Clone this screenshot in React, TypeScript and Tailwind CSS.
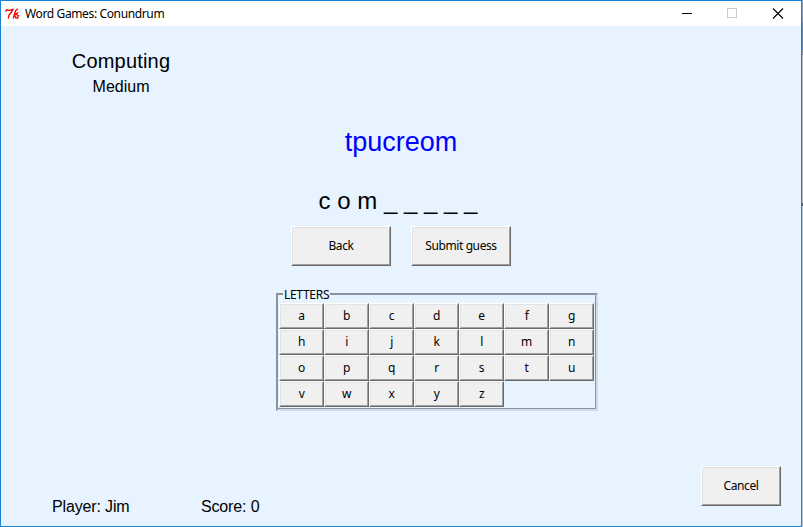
import React from "react";

const UI = "font-['Noto_Sans',sans-serif]";
const ARIAL = "font-['Liberation_Sans',Arial,sans-serif]";

function TkButton({ label, size }: { label: string; size: string }) {
  return (
    <button
      className={`${size} ${UI} shrink-0 border border-t-white border-l-white border-r-[#696969] border-b-[#696969] bg-[#f0f0f0] text-[12px] leading-none tracking-[-0.4px] text-black`}
    >
      <span className="flex h-full w-full items-center justify-center border border-t-[#e3e3e3] border-l-[#e3e3e3] border-r-[#a0a0a0] border-b-[#a0a0a0]">
        <span className="whitespace-nowrap">{label}</span>
      </span>
    </button>
  );
}

function TkLogo() {
  return (
    <svg width="15" height="12" viewBox="0 0 15 12" fill="none" stroke="#f00000" strokeWidth="1.3">
      <path d="M0.5 3.5L1.8 1.8L4 2.3L8 1.5L6.5 4L4 7L3.2 10.5" />
      <path d="M12.8 0.8L10.8 2.5L9.5 6L8.2 10.5M9 7.8L13.2 4.2M9.5 7.5L11 10L13.8 9.8M11.5 6.5L13.5 7.8L12 8.5" />
    </svg>
  );
}

export default function App() {
  return (
    <div className="flex h-[527px] w-[803px] overflow-hidden">
      <div className="flex w-[802px] shrink-0 flex-col border border-[#1883d7] bg-[#e7f3ff]">
        <header className="flex h-[25px] shrink-0 items-center bg-white pl-[4px]">
          <TkLogo />
          <span className={`${UI} ml-[5px] grow text-[12px] leading-none tracking-[-0.37px] text-black`}>
            Word Games: Conundrum
          </span>
          <svg width="120" height="25" viewBox="0 0 120 25" fill="none" shapeRendering="crispEdges">
            <path d="M1 12.5H11" stroke="#000" />
            <rect x="46.5" y="7.5" width="9" height="9" stroke="#ccc" />
            <path d="M92 7.5L102 17.5M102 7.5L92 17.5" stroke="#000" shapeRendering="auto" strokeWidth="1.1" />
          </svg>
        </header>
        <main className={`${ARIAL} flex grow flex-col text-black`}>
          <div className="flex w-[240px] flex-col items-center pt-[23px]">
            <h1 className="text-[20px] leading-[24px] tracking-[0.2px]">Computing</h1>
            <p className="mt-[5px] text-[16px] leading-[18px]">Medium</p>
          </div>
          <p className="mt-[30px] text-center text-[27px] leading-[32px] text-[#0000ff]">tpucreom</p>
          <p className="mt-[29px] pr-[6px] text-center text-[24px] leading-[28px]">c o m _ _ _ _ _</p>
          <div className="mt-[11px] flex gap-[20px] pl-[290px]">
            <TkButton label="Back" size="h-[40px] w-[100px]" />
            <TkButton label="Submit guess" size="h-[40px] w-[100px]" />
          </div>
          <section className="mt-[27px] ml-[275px] h-[118px] w-[322px] border-t-2 border-r-2 border-b-2 border-l-2 border-t-[#8a929b] border-r-[#cfdbe6] border-b-[#cfdbe6] border-l-[#8a929b]">
            <div className="h-full border-r border-b border-[#8a929b] pl-px">
              <div className="flex h-[8px] items-center pl-[5px]">
                <span className={`${UI} relative -top-[4px] -ml-px bg-[#e7f3ff] px-px text-[12px] leading-[14px] tracking-[-0.3px]`}>
                  LETTERS
                </span>
              </div>
              <div className="grid grid-cols-[repeat(7,45px)]">
                {"abcdefghijklmnopqrstuvwxyz".split("").map((l) => (
                  <TkButton key={l} label={l} size="h-[26px] w-[45px]" />
                ))}
              </div>
            </div>
          </section>
          <div className="mt-auto flex h-[60px] justify-between pr-[20px]">
            <div className="flex pt-[31px] pl-[51px] text-[16px] leading-[20px] tracking-[-0.15px]">
              <span className="w-[149px]">Player: Jim</span>
              <span>Score: 0</span>
            </div>
            <TkButton label="Cancel" size="h-[40px] w-[80px]" />
          </div>
        </main>
      </div>
      <div className="flex w-px flex-col">
        <div className="h-[22px] bg-[#7d9fcb]" />
        <div className="h-[28px] bg-[#5f86bd]" />
        <div className="h-[5px] bg-[#8b929b]" />
        <div className="h-[148px] bg-[#b4bac2]" />
        <div className="h-[3px] bg-[#4f5966]" />
        <div className="grow bg-[#b9cadb]" />
      </div>
    </div>
  );
}
